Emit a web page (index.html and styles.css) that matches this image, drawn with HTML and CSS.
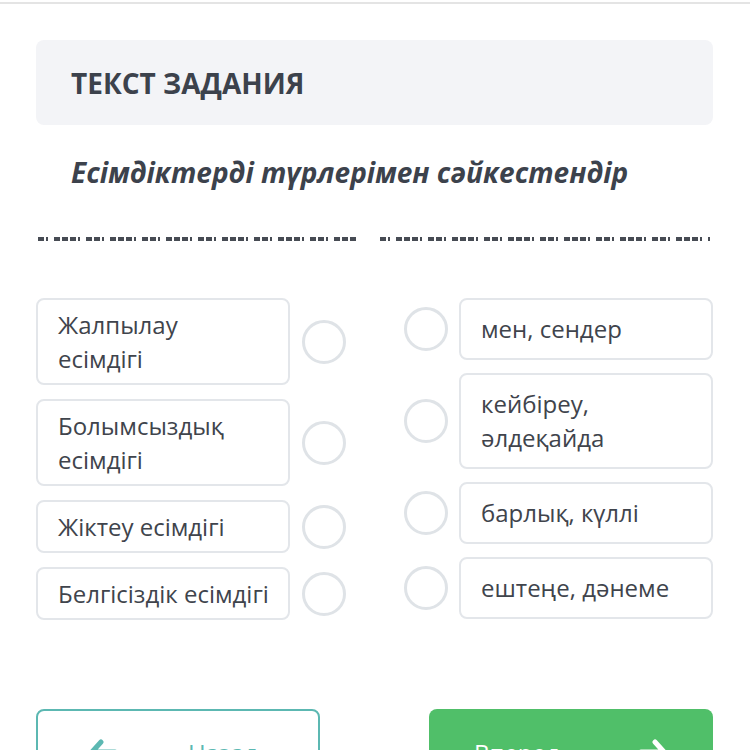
FILE: index.html
```html
<!DOCTYPE html>
<html lang="ru">
<head>
<meta charset="utf-8">
<title>Текст задания</title>
<link rel="stylesheet" href="styles.css">
</head>
<body>
<div class="topbar"></div>
<main class="page">
  <section class="task-head">
    <h2 class="task-label">ТЕКСТ ЗАДАНИЯ</h2>
  </section>
  <p class="task-title">Есімдіктерді түрлерімен сәйкестендір</p>
  <div class="dividers">
    <span class="dash"></span>
    <span class="dash"></span>
  </div>
  <div class="match">
    <div class="col col-left">
      <div class="row"><div class="card card-l">Жалпылау<br>есімдігі</div><span class="dot"></span></div>
      <div class="row"><div class="card card-l">Болымсыздық есімдігі</div><span class="dot"></span></div>
      <div class="row"><div class="card card-l">Жіктеу есімдігі</div><span class="dot"></span></div>
      <div class="row"><div class="card card-l">Белгісіздік есімдігі</div><span class="dot"></span></div>
    </div>
    <div class="col col-right">
      <div class="row"><span class="dot"></span><div class="card card-r">мен, сендер</div></div>
      <div class="row"><span class="dot"></span><div class="card card-r">кейбіреу, әлдеқайда</div></div>
      <div class="row"><span class="dot"></span><div class="card card-r">барлық, күллі</div></div>
      <div class="row"><span class="dot"></span><div class="card card-r">ештеңе, дәнеме</div></div>
    </div>
  </div>
  <div class="nav">
    <button class="btn btn-back">
      <svg class="ico" width="30" height="28" viewBox="0 0 30 28"><path d="M13 4 L4 14 L13 24 M5 14 H27" fill="none" stroke="currentColor" stroke-width="5" stroke-linecap="round" stroke-linejoin="round"/></svg>
      <span class="btn-text">Назад</span>
    </button>
    <button class="btn btn-next">
      <span class="btn-text">Вперед</span>
      <svg class="ico" width="30" height="28" viewBox="0 0 30 28"><path d="M17 4 L26 14 L17 24 M25 14 H3" fill="none" stroke="currentColor" stroke-width="5" stroke-linecap="round" stroke-linejoin="round"/></svg>
    </button>
  </div>
</main>
</body>
</html>
```
FILE: styles.css
```css
* { box-sizing: border-box; }
html, body { margin: 0; padding: 0; background: #fff; }
body { font-family: "Open Sans", "Noto Sans", sans-serif; color: #40444c; overflow: hidden; }

.topbar { height: 4px; border-top: 2px solid #fff; background: #e4e4e4; }

.page { padding: 36px 37px 0 36px; }

.task-head {
  height: 85px;
  background: #f3f4f7;
  border-radius: 8px;
  display: flex;
  align-items: center;
  padding-left: 35px;
}
.task-label { margin: 0; font-size: 28px; font-weight: 700; color: #3c424c; letter-spacing: 0; }

.task-title {
  margin: 27px 0 0 35px;
  font-size: 28px;
  line-height: 40px;
  font-weight: 700;
  font-style: italic;
  color: #3c424c;
}

.dividers { display: flex; justify-content: space-between; margin-top: 45px; padding: 0 3px 0 2px; }
.dash {
  height: 4px;
  width: 320px;
  background: repeating-linear-gradient(90deg,
    #474c54 0 6px, transparent 6px 8px,
    #474c54 8px 10px, transparent 10px 16px,
    #474c54 16px 22px, transparent 22px 24px,
    #474c54 24px 30px, transparent 30px 32px,
    #474c54 32px 38px, transparent 38px 40px,
    #474c54 40px 42px, transparent 42px 48px,
    #474c54 48px 54px, transparent 54px 56px);
}
.dash + .dash { width: 330px; }

.match { display: flex; justify-content: space-between; margin-top: 57px; }
.col { display: flex; flex-direction: column; }
.col-left { gap: 14px; }
.col-right { gap: 13px; }
.row { display: flex; align-items: center; }
.col-left .row { gap: 12px; }
.col-right .row { gap: 11px; }

.card {
  width: 254px;
  border: 2px solid #e3e6ea;
  border-radius: 8px;
  padding: 7.5px 14px 7.5px 20px;
  font-size: 24px;
  line-height: 34px;
  color: #40444c;
}
.card-r { padding: 12px 14px 12px 20px; }

.dot {
  width: 44px;
  height: 44px;
  border: 3px solid #dfe3e7;
  border-radius: 50%;
  flex: none;
}

.nav { display: flex; justify-content: space-between; margin-top: 89px; }
.btn {
  width: 284px;
  height: 86px;
  flex: none;
  border-radius: 8px;
  font-family: "Open Sans", "Noto Sans", sans-serif;
  font-size: 24px;
  display: flex;
  align-items: center;
  padding: 0 50px;
  cursor: pointer;
}
.btn-back { background: #fff; border: 2px solid #5cb8b2; color: #5cb8b2; gap: 70px; }
.btn-next { background: #50bf69; border: none; color: #fff; justify-content: space-between; padding: 0 45px; }
.ico { flex: none; }
```
